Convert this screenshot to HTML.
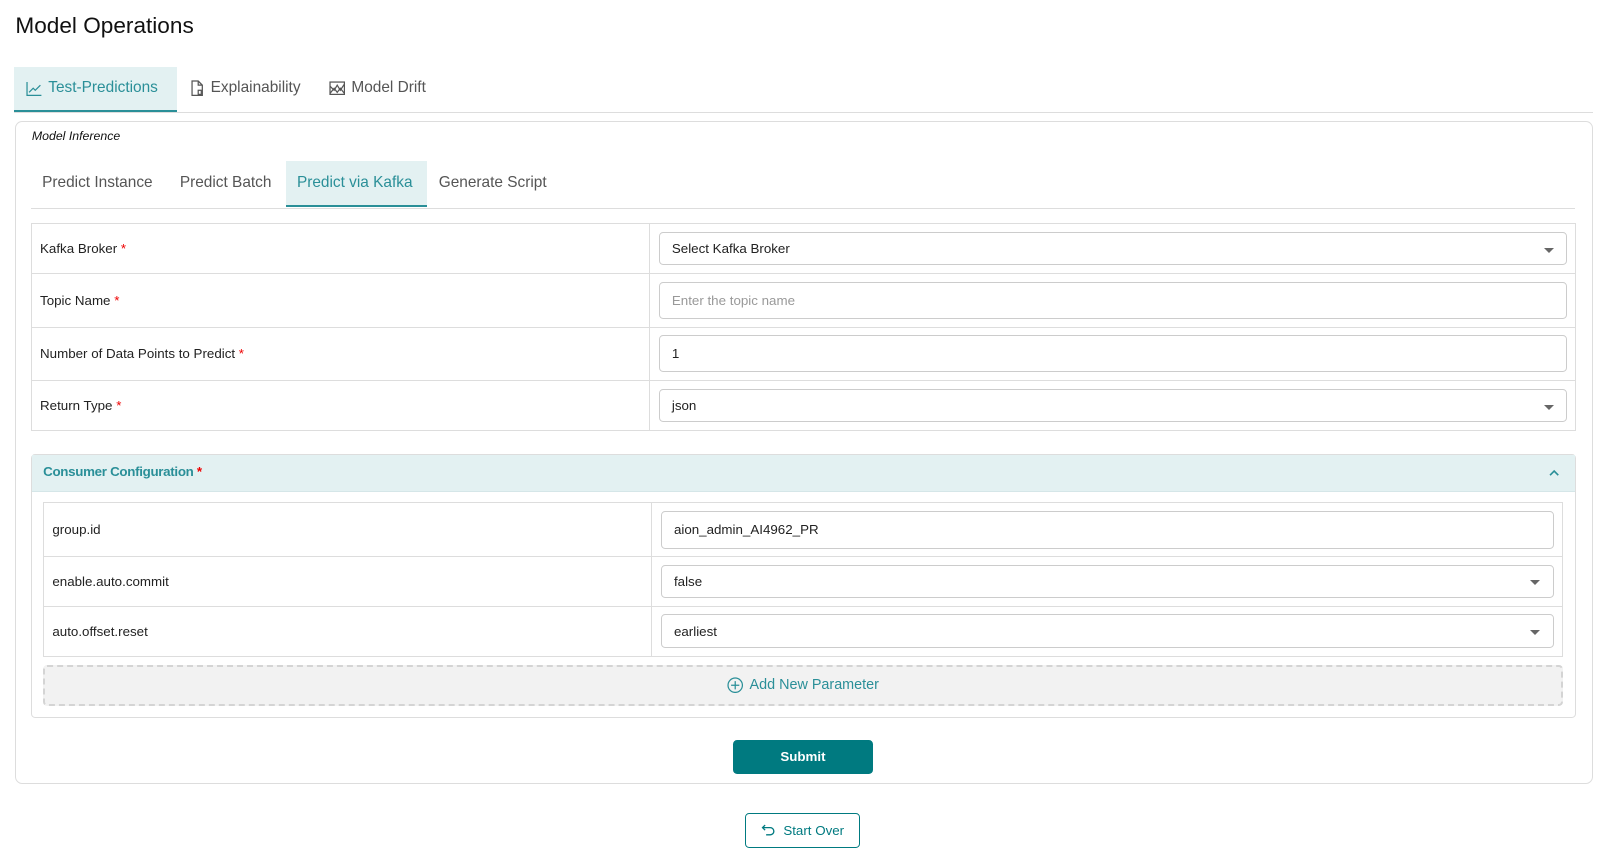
<!DOCTYPE html>
<html><head><meta charset="utf-8"><style>
html{zoom:1.0275}
body{margin:0;background:#fff;font-family:"Liberation Sans",Arial,sans-serif;color:#222;width:1570px;height:830px;position:relative;overflow:hidden}
.a{position:absolute}
.title{left:15px;top:13px;font-size:22px;color:#111}
.tab{top:65px;height:42px;display:flex;align-items:center;font-size:15px;color:#555;gap:6px}
.tab.act{background:#e3f1f2;color:#2a8f98;border-bottom:2px solid #2a8f98;padding:0 11px}
.card{left:15px;top:118px;width:1533px;height:643px;border:1px solid #ddd;border-radius:7px}
.st{top:157px;height:43px;display:flex;align-items:center;font-size:15px;color:#555}
.st.act{background:#e3f1f2;color:#2a8f98;border-bottom:2px solid #2a8f98;padding:0 11px}
table{border-collapse:collapse;position:absolute;font-size:13px}
td{border:1px solid #ddd;padding:0 8px}
.in{border:1px solid #ccc;border-radius:4px;height:34px;display:flex;align-items:center;padding:0 12px;position:relative;font-size:13px}
.car{position:absolute;right:12px;top:14px;width:0;height:0;border-left:5px solid transparent;border-right:5px solid transparent;border-top:5px solid #666}
.req{color:#e00}
</style></head><body>
<div class="a title">Model Operations</div>
<div class="a tab act" style="left:14px;width:136px"><svg width="16" height="16" viewBox="0 0 16 16" fill="none" stroke="#2a8f98" stroke-width="1.2"><path d="M1 2v13h14"/><path d="M3 12l4-4 2 2 5-5"/></svg>Test-Predictions</div>
<div class="a tab" style="left:185px"><svg width="14" height="16" viewBox="0 0 14 16" fill="none" stroke="#555" stroke-width="1.2"><path d="M2 1h6l4 4v10H2z"/><path d="M8 1v4h4"/><rect x="8" y="10" width="3" height="4"/></svg>Explainability</div>
<div class="a tab" style="left:320px"><svg width="16" height="16" viewBox="0 0 16 16" fill="none" stroke="#555" stroke-width="1.2"><rect x="1" y="2" width="14" height="12"/><path d="M1 6l4 4 3-5 3 5 4-6"/><path d="M1 13l4-5 3 4 3-4 4 5"/></svg>Model Drift</div>
<div class="a" style="left:14px;top:109px;width:1536px;height:1px;background:#ddd"></div>
<div class="a card"></div>
<div class="a" style="left:31px;top:126px;font-size:12px;font-style:italic;color:#111">Model Inference</div>
<div class="a st" style="left:41px">Predict Instance</div>
<div class="a st" style="left:175px">Predict Batch</div>
<div class="a st act" style="left:278px;width:116px">Predict via Kafka</div>
<div class="a st" style="left:427px">Generate Script</div>
<div class="a" style="left:30px;top:202px;width:1503px;height:1px;background:#ddd"></div>

<table style="left:30px;top:217px;width:1504px">
<tr style="height:49px"><td style="width:585px">Kafka Broker <span class="req">*</span></td><td><div class="in" style="height:30px">Select Kafka Broker<div class="car"></div></div></td></tr>
<tr style="height:52px"><td>Topic Name <span class="req">*</span></td><td><div class="in" style="color:#999">Enter the topic name</div></td></tr>
<tr style="height:52px"><td>Number of Data Points to Predict <span class="req">*</span></td><td><div class="in">1</div></td></tr>
<tr style="height:49px"><td>Return Type <span class="req">*</span></td><td><div class="in" style="height:30px">json<div class="car"></div></div></td></tr>
</table>

<div class="a" style="left:30px;top:442px;width:1502px;height:255px;border:1px solid #ddd;border-radius:4px"></div>
<div class="a" style="left:31px;top:443px;width:1502px;height:35px;background:#e3f1f2;border-bottom:1px solid #d5e6e8"></div>
<div class="a" style="left:42px;top:452px;font-size:13px;font-weight:bold;color:#2a8f98;letter-spacing:-0.3px">Consumer Configuration <span class="req">*</span></div>
<svg class="a" style="left:1507px;top:456px" width="12" height="8" viewBox="0 0 12 8" fill="none" stroke="#2a8f98" stroke-width="1.6"><path d="M2 6l4-4 4 4"/></svg>

<table style="left:42px;top:489px;width:1479px">
<tr style="height:52px"><td style="width:575px">group.id</td><td><div class="in" style="height:35px">aion_admin_AI4962_PR</div></td></tr>
<tr style="height:49px"><td>enable.auto.commit</td><td><div class="in" style="height:31px">false<div class="car"></div></div></td></tr>
<tr style="height:48px"><td>auto.offset.reset</td><td><div class="in" style="height:31px">earliest<div class="car"></div></div></td></tr>
</table>

<div class="a" style="left:42px;top:647px;width:1475px;height:36px;background:#f2f2f2;border:2px dashed #d4d4d4;border-radius:4px;display:flex;align-items:center;justify-content:center;color:#2a8f98;font-size:14px;gap:6px"><svg width="16" height="16" viewBox="0 0 16 16" fill="none" stroke="#2a8f98" stroke-width="1.2"><circle cx="8" cy="8" r="7"/><path d="M8 4v8M4 8h8"/></svg>Add New Parameter</div>

<div class="a" style="left:713px;top:720px;width:137px;height:33px;background:#007a80;border-radius:4px;color:#fff;font-size:13px;font-weight:bold;display:flex;align-items:center;justify-content:center">Submit</div>

<div class="a" style="left:725px;top:791px;width:110px;height:32px;border:1px solid #007a80;border-radius:4px;color:#007a80;font-size:13px;display:flex;align-items:center;justify-content:center;gap:8px"><svg width="14" height="14" viewBox="0 0 14 14" fill="none" stroke="#007a80" stroke-width="1.3"><path d="M4 2L1.5 4.5 4 7"/><path d="M1.5 4.5H9a3.5 3.5 0 010 7H5"/></svg>Start Over</div>
</body></html>
